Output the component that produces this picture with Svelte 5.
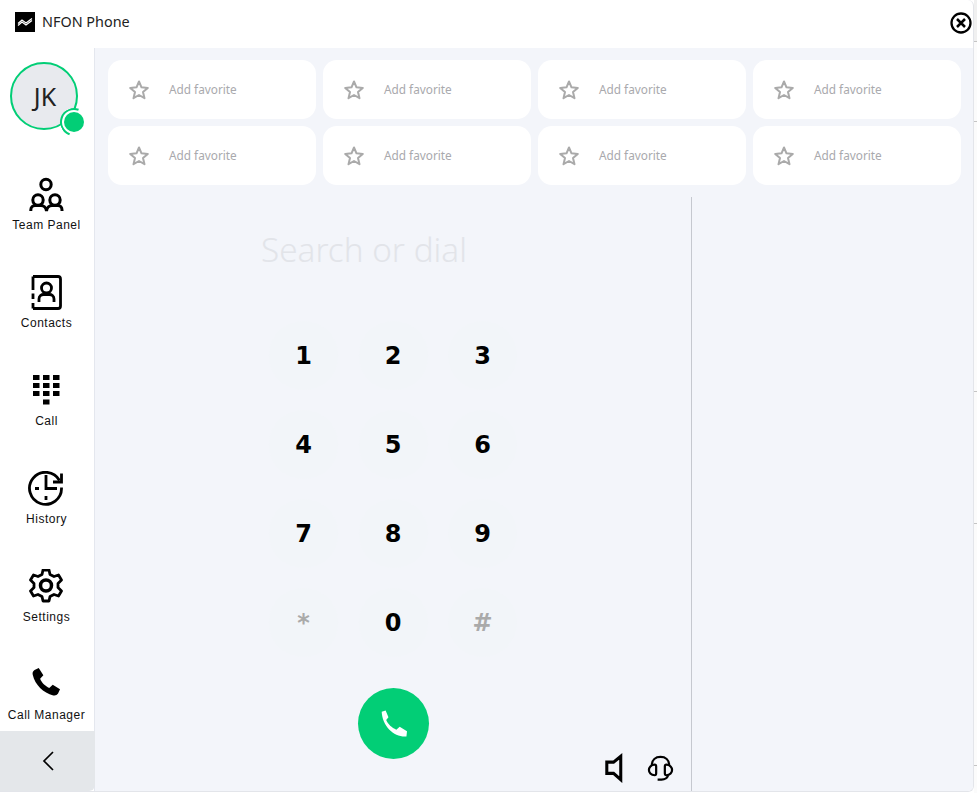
<script>
  const favorites = Array.from({ length: 8 }, (_, i) => i);
  const keys = ['1', '2', '3', '4', '5', '6', '7', '8', '9', '*', '0', '#'];
  const navItems = ['team', 'contacts', 'call', 'history', 'settings', 'manager'];
  const labels = {
    team: 'Team Panel',
    contacts: 'Contacts',
    call: 'Call',
    history: 'History',
    settings: 'Settings',
    manager: 'Call Manager'
  };
  const stripTicks = [41, 121, 391, 523, 765];
  const handsetFat = 'M6.6 2.2 9.9 7.4 7.6 9.9C8.6 12.6 11.4 15.4 14.1 16.4L16.6 14.1 21.8 17.4 20.4 20.4C19.6 21.6 18.4 22 17 21.7 9.8 20 4 14.2 2.3 7 2 5.6 2.4 4.4 3.6 3.6Z';
  const handsetThin = 'M1.500 1 5 0 7.500 6 5.500 8.500C7 12 10.500 15.500 14.500 17L17.500 14.500 24 18.500 23.500 23C13 24 2 14 1.500 1Z';
</script>

<div class="screen">
  <div class="window">
    <header class="titlebar">
      <div class="brand">
        <svg class="logo" viewBox="0 0 20 20">
          <rect width="20" height="20" fill="#000" />
          <path d="M3 11.500 7 8 11 11 17 6.500M3 13.500 7 10 11 13 17 8.500" fill="none" stroke="#fff" stroke-width="1.200" />
        </svg>
        <span>NFON Phone</span>
      </div>
      <svg class="close" viewBox="0 0 22 22">
        <circle cx="11" cy="11" r="9.500" fill="none" stroke="#000" stroke-width="2.300" />
        <path d="M7 7 15 15M15 7 7 15" stroke="#000" stroke-width="2.500" />
      </svg>
    </header>

    <div class="body">
      <nav class="sidebar">
        <div class="avatar-wrap">
          <div class="avatar">JK</div>
          <span class="notch"></span>
          <span class="presence"></span>
        </div>

        {#each navItems as item}
          <div class="nav-item">
            <svg class="nav-icon" viewBox="0 0 36 36" fill="none" stroke="#000" stroke-width="2.800">
              {#if item === 'team'}
                <circle cx="18" cy="7.500" r="5.200" stroke-width="3" />
                <circle cx="10" cy="23" r="5.200" stroke-width="3" />
                <circle cx="27" cy="23" r="5.200" stroke-width="3" />
                <path d="M2.800 34V33C2.800 30 5 28.500 7 28.500H13C15.500 28.500 18 30.500 18.500 34 19 30.500 21.500 28.500 24 28.500H30C32 28.500 34 30 34 33V34" stroke-width="3" />
              {:else if item === 'contacts'}
                <path d="M5 1.500H30C31.500 1.500 32.500 2.500 32.500 4V31C32.500 32.500 31.500 33.500 30 33.500H5" />
                <path d="M5 1.500V15M5 18.500V24M5 28V33.500" />
                <circle cx="18.500" cy="13" r="5" />
                <path d="M11 27V24C11 21 13.500 19.500 15.500 19.500H21.500C23.500 19.500 26 21 26 24V27" />
              {:else if item === 'call'}
                <path fill="#000" stroke="none" d="M5 2h6.500v5H5zM15 2h6.500v5H15zM25 2h6.500v5H25zM5 10h6.500v5H5zM15 10h6.500v5H15zM25 10h6.500v5H25zM5 18h6.500v5H5zM15 18h6.500v5H15zM25 18h6.500v5H25zM15 26.500h6.500v5H15z" />
              {:else if item === 'history'}
                <path d="M31.500 9.500A16 16 0 1 0 33.500 16.500" />
                <path d="M18 4V17.500H29M7 17.500H11M18 25V29" />
                <path d="M33.500 2.500V11H25" />
              {:else if item === 'settings'}
                <g transform="translate(0 -1.500)">
                  <path d="M15 2.500H21L22 7 26 9 30.500 7.500 33.500 12.500 30 16V20L33.500 23.500 30.500 28.500 26 27 22 29 21 33.500H15L14 29 10 27 5.500 28.500 2.500 23.500 6 20V16L2.500 12.500 5.500 7.500 10 9 14 7Z" stroke-linejoin="round" />
                  <circle cx="18" cy="18" r="5.500" stroke-width="3.500" />
                </g>
              {:else}
                <path fill="#000" stroke="none" transform="translate(1.500 -2) scale(1.400)" d={handsetFat} />
              {/if}
            </svg>
            <span class="nav-label">{labels[item]}</span>
          </div>
        {/each}

        <div class="collapse">
          <svg viewBox="0 0 14 22" width="14" height="22">
            <path d="M12 2 3 11 12 20" fill="none" stroke="#000" stroke-width="1.700" />
          </svg>
        </div>
      </nav>

      <main class="content">
        <section class="favorites">
          {#each favorites as fav (fav)}
            <div class="favorite">
              <svg class="star" viewBox="0 0 22 22">
                <path d="M11 2.500 13.500 8.300 19.800 8.900 15 13 16.500 19.200 11 16 5.500 19.200 7 13 2.200 8.900 8.500 8.300Z" fill="none" stroke="#aaa" stroke-width="2" stroke-linejoin="round" />
              </svg>
              <span class="favorite-text">Add favorite</span>
            </div>
          {/each}
        </section>

        <section class="phone">
          <div class="dial-pane">
            <div class="search">Search or dial</div>
            <div class="keypad">
              {#each keys as key}
                <button class="key" class:muted={key === '*' || key === '#'}>{key}</button>
              {/each}
            </div>
            <button class="call-btn" aria-label="Call">
              <svg viewBox="0 0 24 24" width="27" height="28">
                <path fill="#fff" d={handsetThin} />
              </svg>
            </button>
            <div class="audio">
              <svg viewBox="0 0 20 32" width="18" height="30" fill="none" stroke="#000" stroke-width="3.400">
                <path d="M17.500 3V29L9.500 22H2V9.500H9.500Z" />
              </svg>
              <svg viewBox="0 0 28 28" width="27" height="27" fill="none" stroke="#000" stroke-width="2.300">
                <path d="M5 11C5 5 9 2 14 2S23 5 23 11" />
                <path d="M8 10C4 10 2 13 2 15.500S4 21 8 21C9.500 21 9.500 20 9.500 19V12C9.500 11 9.500 10 8 10Z" />
                <path d="M20 10C24 10 26 13 26 15.500S24 21 20 21C18.500 21 18.500 20 18.500 19V12C18.500 11 18.500 10 20 10Z" />
                <path d="M22 21C21 24 19 25.500 15 25.500H11" />
              </svg>
            </div>
          </div>
          <div class="detail-pane"></div>
        </section>
      </main>
    </div>
  </div>

  <div class="strip">
    {#each stripTicks as tick}
      <span class="tick" style="top: {tick}px"></span>
    {/each}
  </div>
</div>

<style>
  :global(body) {
    margin: 0;
    background: #fff;
  }
  .screen {
    width: 977px;
    height: 793px;
    display: flex;
    overflow: hidden;
    font-family: "Noto Sans", "Open Sans", sans-serif;
  }
  .window {
    width: 974px;
    height: 792px;
    flex: none;
    box-sizing: border-box;
    display: flex;
    flex-direction: column;
    border-right: 1px solid #e3e5ea;
    border-bottom: 1px solid #e3e5ea;
    border-top-right-radius: 6px;
    border-bottom-right-radius: 6px;
    overflow: hidden;
  }
  .strip {
    flex: 1;
    position: relative;
    background: linear-gradient(#f0f0f0 41px, #fbfbfb 41px);
  }
  .tick {
    position: absolute;
    left: 0;
    right: 0;
    height: 1px;
    background: #c4c4c4;
  }
  .titlebar {
    height: 48px;
    flex: none;
    display: flex;
    align-items: center;
    justify-content: space-between;
    padding: 0 1px 5px 15px;
    box-sizing: border-box;
  }
  .brand {
    display: flex;
    align-items: center;
    gap: 7px;
    font-size: 14.400px;
    color: #222;
  }
  .logo {
    width: 20px;
    height: 20px;
  }
  .close {
    width: 22px;
    height: 22px;
    margin-top: 3px;
  }
  .body {
    flex: 1;
    display: flex;
    min-height: 0;
  }
  .sidebar {
    width: 95px;
    flex: none;
    box-sizing: border-box;
    display: flex;
    flex-direction: column;
    align-items: center;
    padding-right: 1px;
    border-right: 1px solid #e4e7ee;
    position: relative;
  }
  .avatar-wrap {
    position: relative;
    margin: 14px 5px 47px 0;
    height: 68px;
  }
  .avatar {
    width: 68px;
    height: 68px;
    box-sizing: border-box;
    border: 2px solid #02ce76;
    border-radius: 50%;
    background: #e8eaee;
    display: flex;
    align-items: center;
    justify-content: center;
    padding-left: 2px;
    font-size: 25px;
    color: #222;
  }
  .notch {
    position: absolute;
    right: -10px;
    bottom: -6px;
    width: 28px;
    height: 28px;
    box-sizing: border-box;
    border-radius: 50%;
    background: #fff;
    border: 2px solid transparent;
    border-top-color: #02ce76;
    border-left-color: #02ce76;
    transform: rotate(-25deg);
  }
  .presence {
    position: absolute;
    right: -6px;
    bottom: -2px;
    width: 20px;
    height: 20px;
    border-radius: 50%;
    background: #02ce76;
  }
  .nav-item {
    height: 98px;
    flex: none;
    display: flex;
    flex-direction: column;
    align-items: center;
  }
  .nav-icon {
    width: 36px;
    height: 36px;
    margin-right: 1px;
  }
  .nav-label {
    margin-top: 5px;
    font-family: "Liberation Sans", Arial, sans-serif;
    font-size: 12px;
    line-height: 14px;
    letter-spacing: 0.5px;
    color: #111;
    white-space: nowrap;
  }
  .collapse {
    position: absolute;
    left: 0;
    right: -1px;
    bottom: 0;
    height: 60px;
    background: #e4e7ea;
    border-bottom-right-radius: 6px;
    display: flex;
    align-items: center;
    justify-content: center;
  }
  .content {
    flex: 1;
    min-width: 0;
    background: #f3f5fa;
    padding: 12px 0 0 13px;
    display: flex;
    flex-direction: column;
  }
  .favorites {
    display: grid;
    grid-template-columns: repeat(4, 208px);
    grid-auto-rows: 59px;
    gap: 7px;
  }
  .favorite {
    background: #fff;
    border-radius: 14px;
    display: flex;
    align-items: center;
    padding-left: 20px;
    gap: 19px;
    font-size: 11.800px;
    color: #a9a9ad;
  }
  .favorite-text {
    padding-bottom: 2px;
  }
  .star {
    width: 22px;
    height: 22px;
  }
  .phone {
    flex: 1;
    display: flex;
    margin-top: 12px;
    min-height: 0;
  }
  .dial-pane {
    width: 583px;
    flex: none;
    position: relative;
    border-right: 1px solid #c5c8cf;
  }
  .search {
    position: absolute;
    left: 153px;
    top: 30px;
    font-size: 33.300px;
    font-weight: 300;
    line-height: 44px;
    color: #e2e4e9;
  }
  .keypad {
    position: absolute;
    left: 161px;
    top: 124px;
    display: grid;
    grid-template-columns: repeat(3, 69px);
    grid-auto-rows: 69px;
    column-gap: 20.500px;
    row-gap: 20px;
  }
  .key {
    border: 0;
    padding: 0;
    border-radius: 50%;
    background: #f2f5f9;
    font-family: "DejaVu Sans", sans-serif;
    font-weight: 700;
    font-size: 24px;
    color: #000;
  }
  .key.muted {
    color: #aaa;
  }
  .call-btn {
    position: absolute;
    left: 250px;
    top: 491px;
    width: 71px;
    height: 71px;
    border: 0;
    padding: 0;
    border-radius: 50%;
    background: #02ce76;
    display: flex;
    align-items: center;
    justify-content: center;
  }
  .audio {
    position: absolute;
    right: 17px;
    bottom: 8px;
    display: flex;
    align-items: center;
    gap: 24px;
  }
  .detail-pane {
    flex: 1;
  }
</style>
